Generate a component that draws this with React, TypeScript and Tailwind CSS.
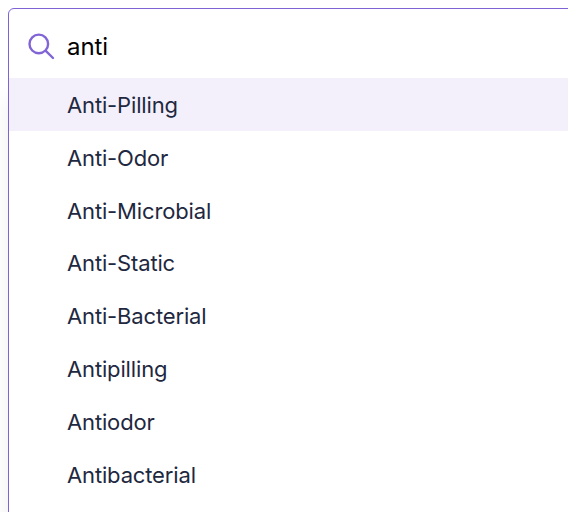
const items = ['Anti-Pilling', 'Anti-Odor', 'Anti-Microbial', 'Anti-Static', 'Anti-Bacterial', 'Antipilling', 'Antiodor', 'Antibacterial'];

export default function App() {
  return (
    <div className="h-[512px] w-[568px] overflow-hidden bg-white pt-2 pl-2 font-['Inter',sans-serif]">
      <div className="h-[560px] w-[600px] rounded-[6px] border border-[#7f62d6] bg-white shadow-[0_90px_20px_0_rgba(0,0,0,0.07)]">
        <div className="flex h-[69px] items-center pt-1.5 pl-[19px]">
          <svg className="size-[27px] shrink-0" viewBox="0 0 27 27" fill="none" stroke="#8165d6" strokeWidth="2.4" strokeLinecap="round">
            <circle cx="10.8" cy="10.9" r="9.3" />
            <path d="M17.8 17.8L25 25" />
          </svg>
          <span className="ml-3 text-[24px] leading-8 tracking-[-0.1px] text-black">anti</span>
        </div>
        <ul>
          {items.map((item, i) => (
            <li key={item} className={`flex h-[52.8px] items-center pt-[2.25px] pl-[58px] text-[22px] leading-[33px] tracking-[-0.15px] text-[#1e2840] ${i === 0 ? 'bg-[#f3f0fb]' : ''}`}>
              {item}
            </li>
          ))}
        </ul>
      </div>
    </div>
  );
}
